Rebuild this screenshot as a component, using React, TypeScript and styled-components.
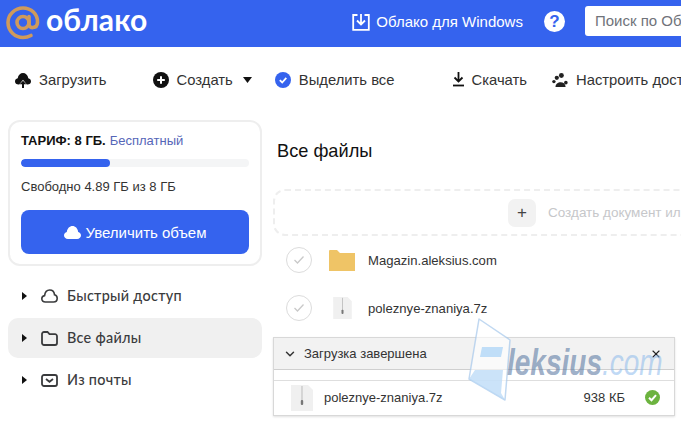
import styled, { createGlobalStyle } from "styled-components";
import { ChevronDown, X } from "lucide-react";

const GlobalStyle = createGlobalStyle`
  html, body {
    margin: 0;
    padding: 0;
    width: 681px;
    height: 427px;
    overflow: hidden;
    background: #fff;
    font-family: "Liberation Sans", Arial, sans-serif;
    color: #2c2d2e;
  }
`

const Page = styled.div`
  position: relative;
  width: 681px;
  height: 427px;
  overflow: hidden;
`

const Header = styled.header`
  height: 47px;
  background: #3563ee;
  display: flex;
  align-items: center;
  white-space: nowrap;
`

const LogoMark = styled.svg`
  width: 34px;
  height: 34px;
  margin-left: 6px;
  margin-top: -2px;
  flex: none;
`

const LogoText = styled.span`
  margin-left: 6px;
  margin-top: -9px;
  font-family: Lato, sans-serif;
  font-size: 30px;
  font-weight: 700;
  letter-spacing: 0.1px;
  color: #fff;
`

const DesktopLink = styled.div`
  margin-left: 205px;
  display: flex;
  align-items: center;
  gap: 6px;
  color: #fff;
  font-size: 15px;
  margin-top: -4px;
`

const HelpIcon = styled.div`
  width: 21px;
  height: 21px;
  margin-left: 21px;
  margin-top: -4px;
  border-radius: 50%;
  background: #fff;
  color: #3563ee;
  font-size: 17px;
  font-weight: 700;
  display: flex;
  align-items: center;
  justify-content: center;
  flex: none;
`

const SearchBox = styled.div`
  margin-left: 20px;
  margin-top: -6px;
  width: 140px;
  height: 30px;
  padding-left: 10px;
  background: #fff;
  border-radius: 3px;
  color: #70737a;
  font-size: 15px;
  line-height: 30px;
  flex: none;
`

const Toolbar = styled.div`
  height: 65px;
  display: flex;
  align-items: center;
  white-space: nowrap;
  font-size: 14.8px;
  color: #333;
`

const ToolItem = styled.div<{ $left: number }>`
  margin-left: ${(p) => p.$left}px;
  display: flex;
  align-items: center;
  gap: 8px;
  flex: none;
`

const Columns = styled.div`
  display: flex;
  align-items: flex-start;
`

const Sidebar = styled.aside`
  width: 254px;
  margin-left: 8px;
  margin-top: 8px;
  flex: none;
`

const TariffCard = styled.div`
  box-sizing: border-box;
  height: 146px;
  padding: 11px 11px 0 11px;
  border: 2px solid #eeeeee;
  border-radius: 12px;
`

const TariffTitle = styled.div`
  font-size: 13px;
  line-height: 15px;
  font-weight: 700;
  color: #111;
`

const PlanName = styled.span`
  font-weight: 400;
  color: #5566b8;
  margin-left: 4px;
`

const Track = styled.div`
  margin-top: 11px;
  height: 8px;
  border-radius: 4px;
  background: #f4f5f6;
  overflow: hidden;
`

const Fill = styled.div`
  height: 100%;
  border-radius: 4px;
  background: #3563ee;
`

const FreeText = styled.div`
  margin-top: 12px;
  font-size: 13px;
  line-height: 15px;
  color: #333;
`

const UpgradeButton = styled.div`
  margin-top: 16px;
  height: 44px;
  border-radius: 8px;
  background: #3563ee;
  color: #fff;
  font-size: 15px;
  display: flex;
  align-items: center;
  justify-content: center;
  gap: 5px;
`

const Nav = styled.nav`
  margin-top: 10px;
  display: flex;
  flex-direction: column;
  gap: 2px;
  font-family: Lato, sans-serif;
  font-size: 14.4px;
  font-weight: 500;
  letter-spacing: 0.3px;
  color: #3a3b3d;
`

const NavRow = styled.div<{ $active?: boolean }>`
  height: 40px;
  padding-left: 14px;
  display: flex;
  align-items: center;
  border-radius: 10px;
  background: ${(p) => (p.$active ? "#f0f0f0" : "transparent")};
`

const Caret = styled.span`
  width: 0;
  height: 0;
  border-top: 4px solid transparent;
  border-bottom: 4px solid transparent;
  border-left: 5px solid #111;
  margin-right: 14px;
  flex: none;
`

const NavLabel = styled.span`
  margin-left: 9px;
  margin-top: -2px;
`

const Main = styled.main`
  margin-left: 11px;
  flex: 1;
  min-width: 0;
`

const Title = styled.h1`
  margin: 0;
  padding: 28px 0 0 4px;
  font-size: 18.2px;
  line-height: 22px;
  font-weight: 400;
  color: #111;
`

const DropZone = styled.div`
  box-sizing: border-box;
  width: 480px;
  height: 47px;
  margin-top: 27px;
  padding-left: 233px;
  display: flex;
  align-items: center;
  border: 2px dashed #eeeeee;
  border-radius: 12px;
  white-space: nowrap;
  color: #c6c7ca;
  font-size: 13.5px;
`

const PlusButton = styled.div`
  width: 28px;
  height: 28px;
  margin-right: 12px;
  border-radius: 7px;
  background: #f2f2f2;
  color: #444;
  font-size: 17px;
  line-height: 28px;
  text-align: center;
  flex: none;
`

const FileRow = styled.div`
  height: 48px;
  padding-left: 13px;
  display: flex;
  align-items: center;
  font-size: 13.1px;
  color: #333;
`

const CheckCircle = styled.div`
  box-sizing: border-box;
  width: 26px;
  height: 26px;
  margin-right: 17px;
  border: 1px solid #dcdcdc;
  border-radius: 50%;
  display: flex;
  align-items: center;
  justify-content: center;
  flex: none;
`

const ThumbSlot = styled.span`
  width: 26px;
  display: flex;
  justify-content: center;
  flex: none;
`

const FileName = styled.span`
  margin-left: 13px;
`

const UploadPanel = styled.div`
  position: absolute;
  left: 273px;
  top: 337px;
  width: 402px;
  height: 79px;
  box-sizing: border-box;
  background: #fff;
  border: 1px solid #d8d8d8;
  box-shadow: 0 1px 2px rgba(0, 0, 0, 0.12);
  font-size: 13px;
  color: #333;
`

const PanelHeader = styled.div`
  height: 31px;
  padding: 0 12px 0 9px;
  display: flex;
  align-items: center;
  background: #f2f2f2;
  border-bottom: 1px solid #cfcfcf;
`

const PanelTitle = styled.span`
  margin-left: 7px;
  flex: 1;
`

const PanelRow = styled.div`
  box-sizing: border-box;
  margin-top: 10px;
  height: 35px;
  padding: 0 14px 1px 17px;
  display: flex;
  align-items: center;
  border-top: 1px solid #dedede;
`

const PanelName = styled.span`
  margin-left: 11px;
  flex: 1;
`

const SizeLabel = styled.span`
  margin-right: 20px;
`

const Watermark = styled.div`
  position: absolute;
  left: 467px;
  top: 318px;
  width: 214px;
  height: 84px;
  pointer-events: none;
`

const WatermarkLogo = styled.svg`
  position: absolute;
  left: 0;
  top: 0;
`

const WatermarkText = styled.span`
  position: absolute;
  left: 40px;
  top: 24px;
  font-size: 28px;
  line-height: 32px;
  font-style: italic;
  font-weight: 700;
  white-space: nowrap;
  transform: scaleY(1.3);
  transform-origin: 0 0;
  color: rgba(95, 125, 165, 0.62);
`

const WatermarkDomain = styled.span`
  font-weight: 400;
  color: rgba(130, 180, 235, 0.5);
`

function ArchiveIcon({ width, height }: { width: number; height: number }) {
  return (
    <svg width={width} height={height} viewBox="0 0 22 26" style={{ flex: "none" }}>
      <path d="M0 0h17l5 5v21H0z" fill="#f0f0f0" />
      <path d="M11 1v15" stroke="#bbb" strokeWidth="1" />
      <rect x="9.800" y="15" width="2.400" height="5" rx="1" fill="#777" />
    </svg>
  )
}

function RowCheck() {
  return (
    <CheckCircle>
      <svg width="12" height="10" viewBox="0 0 12 10">
        <path d="M1.500 5l3 3 6 -6.500" fill="none" stroke="#c9c9c9" strokeWidth="1.300" />
      </svg>
    </CheckCircle>
  )
}

export default function App() {
  return (
    <Page>
      <GlobalStyle />
      <Header>
        <LogoMark viewBox="0 0 34 34">
          <circle cx="17" cy="16.500" r="6" fill="none" stroke="#cf9a5c" strokeWidth="3.600" />
          <path
            d="M23 10.500v7.500c0 5 8 5 8.500 -1.500C32 8 25 2 17 2 9 2 2 8.500 2 16.500 2 25 9 31.500 17 31.500c3.200 0 5.600 -.7 8 -2"
            fill="none"
            stroke="#cf9a5c"
            strokeWidth="3.600"
            strokeLinecap="round"
          />
        </LogoMark>
        <LogoText>облако</LogoText>
        <DesktopLink>
          <svg width="18" height="18" viewBox="0 0 18 18" fill="none" stroke="#fff" strokeWidth="1.800">
            <path d="M5.500 2H1.200v14.800h15.600V2h-4.300" />
            <path d="M9 1v10M5 7.500L9 11.500l4 -4" />
          </svg>
          Облако для Windows
        </DesktopLink>
        <HelpIcon>?</HelpIcon>
        <SearchBox>Поиск по Облаку</SearchBox>
      </Header>

      <Toolbar>
        <ToolItem $left={15}>
          <svg width="16" height="16" viewBox="0 0 16 16">
            <path d="M3.500 12.500C1.500 12.500 0 11.200 0 9.400 0 7.800 1.100 6.600 2.700 6.300 3.200 3 5.400 1 8 1s4.800 2 5.300 5.300c1.600 .3 2.700 1.500 2.700 3.100 0 1.800 -1.500 3.100 -3.500 3.100h-.7L8 7.800 4.200 12.500z" fill="#111" />
            <path d="M8 8.800L4.600 12.300H7V16h2v-3.700h2.400z" fill="#111" />
          </svg>
          Загрузить
        </ToolItem>
        <ToolItem $left={46}>
          <svg width="16" height="16" viewBox="0 0 16 16">
            <circle cx="8" cy="8" r="8" fill="#111" />
            <path d="M8 4.200v7.600M4.200 8h7.600" stroke="#fff" strokeWidth="2" />
          </svg>
          Создать
          <svg width="9" height="6" viewBox="0 0 9 6" style={{ marginLeft: 2 }}>
            <path d="M0 0h9L4.500 6z" fill="#111" />
          </svg>
        </ToolItem>
        <ToolItem $left={23}>
          <svg width="16" height="16" viewBox="0 0 16 16">
            <circle cx="8" cy="8" r="8" fill="#3563ee" />
            <path d="M4.800 8.200L7.200 10.500 11.300 5.900" fill="none" stroke="#fff" strokeWidth="1.800" />
          </svg>
          Выделить все
        </ToolItem>
        <ToolItem $left={58}>
          <svg width="11" height="15" viewBox="0 0 11 15">
            <path d="M5.500 0v9M1.500 5.500l4 4 4 -4" fill="none" stroke="#111" strokeWidth="1.800" />
            <path d="M0 13.500h11" stroke="#111" strokeWidth="1.800" />
          </svg>
          Скачать
        </ToolItem>
        <ToolItem $left={25}>
          <svg width="16" height="14" viewBox="0 0 15 13" fill="#222">
            <circle cx="8.800" cy="2.300" r="2.300" />
            <circle cx="4.500" cy="4.500" r="2" />
            <circle cx="1.800" cy="8" r="1.600" />
            <circle cx="13" cy="9" r="1.700" />
            <path d="M3.300 13c-.4 -5 8.800 -6.800 9.500 0z" />
          </svg>
          Настроить доступ
        </ToolItem>
      </Toolbar>

      <Columns>
        <Sidebar>
          <TariffCard>
            <TariffTitle>
              ТАРИФ: 8 ГБ.
              <PlanName>Бесплатный</PlanName>
            </TariffTitle>
            <Track>
              <Fill style={{ width: `${(3.11 / 8) * 100}%` }} />
            </Track>
            <FreeText>Свободно 4.89 ГБ из 8 ГБ</FreeText>
            <UpgradeButton>
              <svg width="17" height="13" viewBox="0 0 17 13">
                <path d="M4 13C1.500 13 0 11.300 0 9.300 0 7.500 1.200 6.200 2.800 5.900 3.300 2.300 5.700 0 8.500 0s5.200 2.300 5.700 5.900C15.800 6.200 17 7.500 17 9.300c0 2 -1.500 3.700 -4 3.700z" fill="#fff" />
              </svg>
              Увеличить объем
            </UpgradeButton>
          </TariffCard>
          <Nav>
            <NavRow>
              <Caret />
              <svg width="17" height="14" viewBox="0 0 17 14" fill="none" stroke="#3a3b3d" strokeWidth="1.600">
                <path d="M4.300 13C2.200 13 .8 11.600 .8 9.800c0 -1.700 1.200 -3 2.800 -3.200C4 3.200 6 1 8.700 1c2.600 0 4.500 2 4.800 4.700 1.600 .3 2.700 1.800 2.700 3.600 0 2 -1.500 3.700 -3.700 3.700z" />
              </svg>
              <NavLabel>Быстрый доступ</NavLabel>
            </NavRow>
            <NavRow $active>
              <Caret />
              <svg width="17" height="15" viewBox="0 0 17 15" fill="none" stroke="#3a3b3d" strokeWidth="1.800">
                <path d="M1 3a2 2 0 0 1 2 -2h3.500l2 2.200H14a2 2 0 0 1 2 2V12a2 2 0 0 1 -2 2H3a2 2 0 0 1 -2 -2z" />
              </svg>
              <NavLabel>Все файлы</NavLabel>
            </NavRow>
            <NavRow>
              <Caret />
              <svg width="17" height="13" viewBox="0 0 17 13" fill="none" stroke="#3a3b3d" strokeWidth="1.800">
                <rect x="1" y="1" width="15" height="11" rx="2" />
                <path d="M5 5l3.500 2.800L12 5" />
              </svg>
              <NavLabel>Из почты</NavLabel>
            </NavRow>
          </Nav>
        </Sidebar>

        <Main>
          <Title>Все файлы</Title>
          <DropZone>
            <PlusButton>+</PlusButton>
            Создать документ или загрузить файлы
          </DropZone>
          <FileRow>
            <RowCheck />
            <svg width="26" height="21" viewBox="0 0 26 21" style={{ flex: "none" }}>
              <path d="M0 1a1 1 0 0 1 1 -1h7l3 3h15v18H0z" fill="#efc466" />
            </svg>
            <FileName>Magazin.aleksius.com</FileName>
          </FileRow>
          <FileRow>
            <RowCheck />
            <ThumbSlot>
              <ArchiveIcon width={19} height={22} />
            </ThumbSlot>
            <FileName>poleznye-znaniya.7z</FileName>
          </FileRow>
        </Main>
      </Columns>

      <UploadPanel>
        <PanelHeader>
          <ChevronDown size={14} strokeWidth={2.500} color="#333" />
          <PanelTitle>Загрузка завершена</PanelTitle>
          <X size={12} strokeWidth={2.200} color="#222" />
        </PanelHeader>
        <PanelRow>
          <ArchiveIcon width={22} height={26} />
          <PanelName>poleznye-znaniya.7z</PanelName>
          <SizeLabel>938 КБ</SizeLabel>
          <svg width="15" height="15" viewBox="0 0 15 15">
            <circle cx="7.500" cy="7.500" r="7.500" fill="#6cb33f" />
            <path d="M4 7.700l2.500 2.500 4.500 -5" fill="none" stroke="#fff" strokeWidth="2" />
          </svg>
        </PanelRow>
      </UploadPanel>

      <Watermark>
        <WatermarkLogo width="48" height="84" viewBox="0 0 48 84">
          <path d="M12 1L43 22 38 82 2 61z" fill="rgba(255, 255, 255, 0.6)" stroke="rgba(165, 200, 235, 0.7)" strokeWidth="1.500" strokeLinejoin="round" />
          <path d="M15 29H36L34 39H13z" fill="rgba(185, 218, 247, 0.9)" />
          <path d="M8 52H36L34 75 38 82 2 61z" fill="rgba(185, 218, 247, 0.75)" />
        </WatermarkLogo>
        <WatermarkText>
          leksius<WatermarkDomain>.com</WatermarkDomain>
        </WatermarkText>
      </Watermark>
    </Page>
  )
}
